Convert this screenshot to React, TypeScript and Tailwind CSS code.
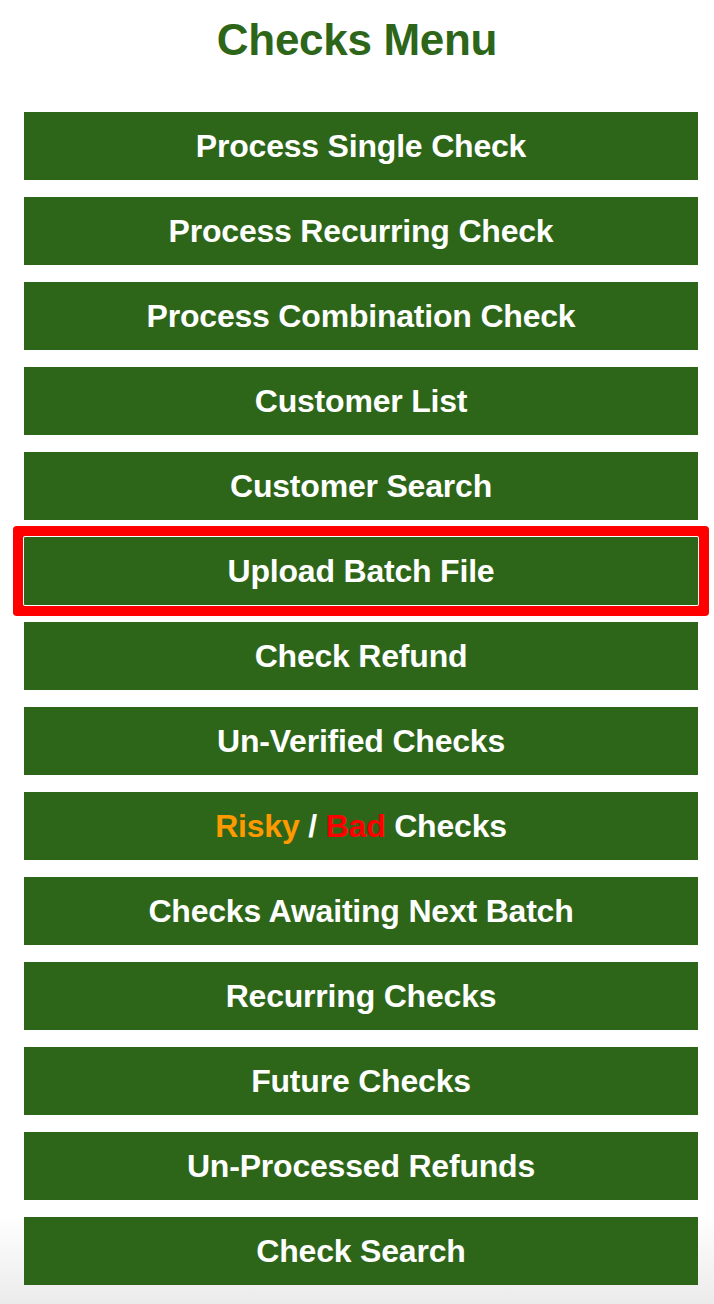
import React from 'react';

const items: { label: React.ReactNode; active?: boolean }[] = [
    { label: 'Process Single Check' },
    { label: 'Process Recurring Check' },
    { label: 'Process Combination Check' },
    { label: 'Customer List' },
    { label: 'Customer Search' },
    { label: 'Upload Batch File', active: true },
    { label: 'Check Refund' },
    { label: 'Un-Verified Checks' },
    {
        label: (
            <>
                <span className="text-[#ff9900]">Risky</span> /{' '}
                <span className="text-[#ff0000]">Bad</span> Checks
            </>
        ),
    },
    { label: 'Checks Awaiting Next Batch' },
    { label: 'Recurring Checks' },
    { label: 'Future Checks' },
    { label: 'Un-Processed Refunds' },
    { label: 'Check Search' },
];

const MenuButton = ({ label, active }: { label: React.ReactNode; active?: boolean }) => (
    <a
        href="#"
        className={`flex h-[68px] w-full items-center justify-center bg-[#2e6619] text-[32px] font-bold tracking-[-0.2px] text-white ${
            active ? 'rounded-[1px] shadow-[0_0_0_1px_#ffffff,0_0_0_11px_#ff0000]' : ''
        }`}
    >
        <span>{label}</span>
    </a>
);

export default function App() {
    return (
        <div
            className="min-h-[1304px] w-full bg-[linear-gradient(to_bottom,#ffffff_0%,#ffffff_93%,#ebebeb_100%)] pb-5"
            style={{ fontFamily: '"Liberation Sans", Arial, sans-serif' }}
        >
            <h1 className="flex h-[80px] items-center justify-center text-[44px] font-bold tracking-[-0.3px] text-[#2e6619]">
                Checks Menu
            </h1>
            <nav className="mt-[32px] flex flex-col gap-[17px] pl-6 pr-4">
                {items.map((item, i) => (
                    <MenuButton key={i} label={item.label} active={item.active} />
                ))}
            </nav>
        </div>
    );
}
